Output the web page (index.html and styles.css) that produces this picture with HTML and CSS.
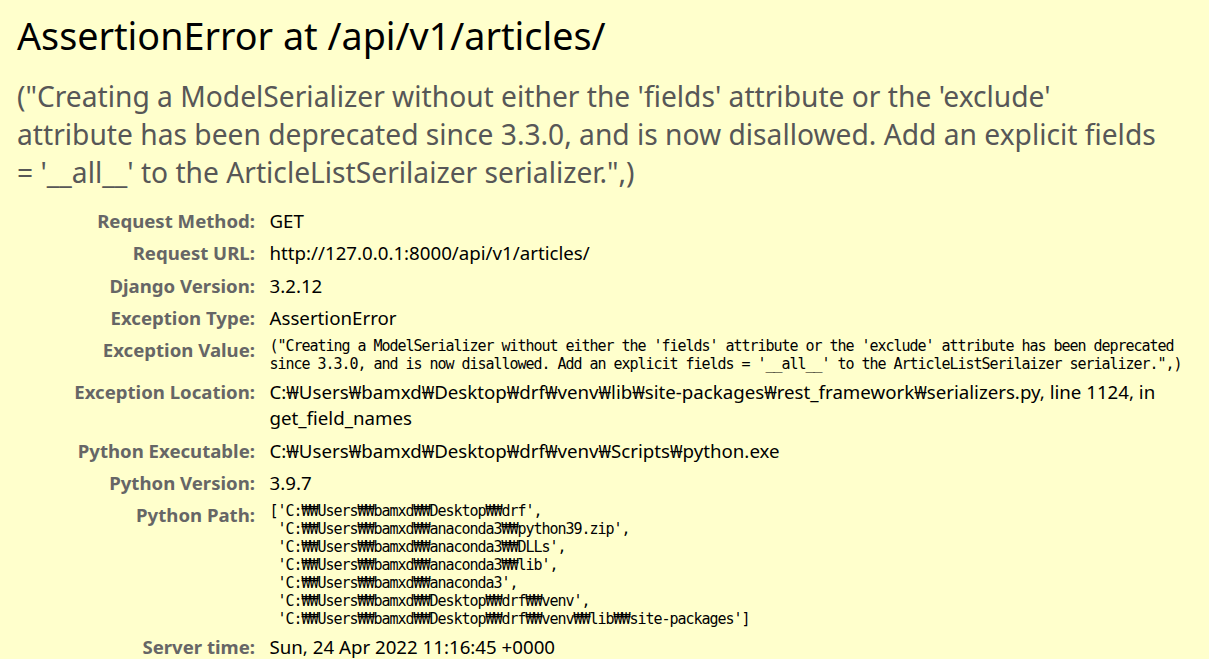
FILE: index.html
```html
<!DOCTYPE html>
<html lang="en">
<head>
<meta charset="utf-8">
<title>AssertionError at /api/v1/articles/</title>
<link rel="stylesheet" href="styles.css">
</head>
<body>
<div class="summary">
  <h1 class="title">AssertionError at /api/v1/articles/</h1>
  <p class="exception-value">("Creating a ModelSerializer without either the 'fields' attribute or the 'exclude' attribute has been deprecated since 3.3.0, and is now disallowed. Add an explicit fields = '__all__' to the ArticleListSerilaizer serializer.",)</p>
  <table class="meta">
    <tbody>
      <tr><th>Request Method:</th><td>GET</td></tr>
      <tr><th>Request URL:</th><td>http://127.0.0.1:8000/api/v1/articles/</td></tr>
      <tr><th>Django Version:</th><td>3.2.12</td></tr>
      <tr><th>Exception Type:</th><td>AssertionError</td></tr>
      <tr><th>Exception Value:</th><td><pre class="mono">("Creating a ModelSerializer without either the 'fields' attribute or the 'exclude' attribute has been deprecated since 3.3.0, and is now disallowed. Add an explicit fields = '__all__' to the ArticleListSerilaizer serializer.",)</pre></td></tr>
      <tr><th>Exception Location:</th><td>C:₩Users₩bamxd₩Desktop₩drf₩venv₩lib₩site-packages₩rest_framework₩serializers.py, line 1124, in get_field_names</td></tr>
      <tr><th>Python Executable:</th><td>C:₩Users₩bamxd₩Desktop₩drf₩venv₩Scripts₩python.exe</td></tr>
      <tr><th>Python Version:</th><td>3.9.7</td></tr>
      <tr><th>Python Path:</th><td><pre class="mono">['C:₩₩Users₩₩bamxd₩₩Desktop₩₩drf',
 'C:₩₩Users₩₩bamxd₩₩anaconda3₩₩python39.zip',
 'C:₩₩Users₩₩bamxd₩₩anaconda3₩₩DLLs',
 'C:₩₩Users₩₩bamxd₩₩anaconda3₩₩lib',
 'C:₩₩Users₩₩bamxd₩₩anaconda3',
 'C:₩₩Users₩₩bamxd₩₩Desktop₩₩drf₩₩venv',
 'C:₩₩Users₩₩bamxd₩₩Desktop₩₩drf₩₩venv₩₩lib₩₩site-packages']</pre></td></tr>
      <tr><th>Server time:</th><td>Sun, 24 Apr 2022 11:16:45 +0000</td></tr>
    </tbody>
  </table>
</div>
</body>
</html>
```
FILE: styles.css
```css
html, body {
  margin: 0;
  padding: 0;
}
body {
  background: #ffffcc;
  color: #000;
  font-family: "Noto Sans", "Noto Sans CJK KR", sans-serif;
  font-size: 18.7px;
}
.summary {
  background: #ffffcc;
  padding: 12px 17px 20px 17px;
}
.title {
  margin: 0;
  font-weight: normal;
  font-size: 37.7px;
  line-height: 48px;
  color: #000;
}
.exception-value {
  margin: 17px 0 14px 0;
  padding-right: 36px;
  font-size: 28.2px;
  line-height: 38px;
  color: #575757;
}
.meta {
  border-collapse: collapse;
  width: 100%;
  border: none;
  background: transparent;
}
.meta th,
.meta td {
  vertical-align: top;
  padding: 3px 3px 3px 4.5px;
  line-height: 26.3px;
  font-size: 18.7px;
}
.meta th {
  width: 235px;
  text-align: right;
  color: #666;
  font-weight: bold;
  font-size: 18.6px;
  padding-left: 3px;
  padding-right: 10px;
  white-space: nowrap;
}
.mono {
  margin: 0;
  font-family: "DejaVu Sans Mono", "Liberation Mono", monospace;
  font-size: 15px;
  letter-spacing: -1.03px;
  line-height: 18px;
  white-space: pre-wrap;
  color: #000;
}
```
